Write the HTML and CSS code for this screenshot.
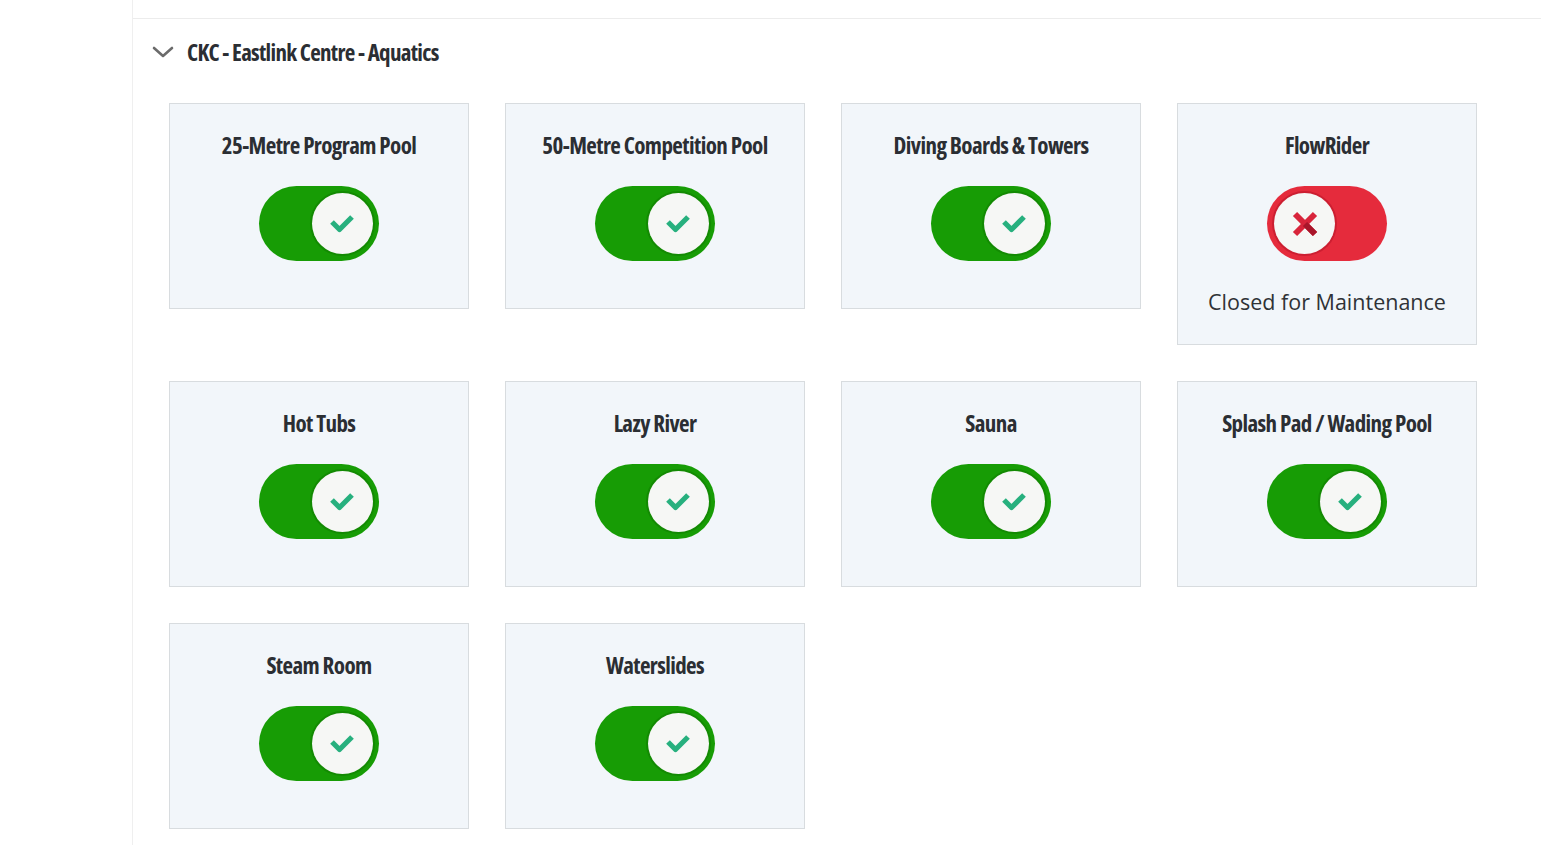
FILE: index.html
```html
<!DOCTYPE html>
<html lang="en">
<head>
<meta charset="utf-8">
<title>CKC - Eastlink Centre - Aquatics</title>
<link rel="stylesheet" href="styles.css">
</head>
<body>
<div class="page">
  <aside class="sidebar"></aside>
  <main class="main">
    <div class="topbar"></div>
    <section class="facility">
      <header class="facility-header">
        <svg class="chevron" width="22" height="14" viewBox="0 0 22 14" aria-hidden="true">
          <path d="M2 3 L11 11 L20 3" fill="none" stroke="#6b6b6b" stroke-width="2.6" stroke-linecap="round" stroke-linejoin="round"/>
        </svg>
        <h2 class="facility-title">CKC - Eastlink Centre - Aquatics</h2>
      </header>
      <div class="grid">
        <div class="card">
          <h3 class="card-title">25-Metre Program Pool</h3>
          <div class="toggle on"><span class="knob"><svg width="26" height="20" viewBox="0 0 26 20"><path d="M2 8 L9.5 15.5 L22 3" fill="none" stroke="#27b07e" stroke-width="5.2" stroke-linejoin="round"/></svg></span></div>
        </div>
        <div class="card">
          <h3 class="card-title">50-Metre Competition Pool</h3>
          <div class="toggle on"><span class="knob"><svg width="26" height="20" viewBox="0 0 26 20"><path d="M2 8 L9.5 15.5 L22 3" fill="none" stroke="#27b07e" stroke-width="5.2" stroke-linejoin="round"/></svg></span></div>
        </div>
        <div class="card">
          <h3 class="card-title">Diving Boards &amp; Towers</h3>
          <div class="toggle on"><span class="knob"><svg width="26" height="20" viewBox="0 0 26 20"><path d="M2 8 L9.5 15.5 L22 3" fill="none" stroke="#27b07e" stroke-width="5.2" stroke-linejoin="round"/></svg></span></div>
        </div>
        <div class="card">
          <h3 class="card-title">FlowRider</h3>
          <div class="toggle off"><span class="knob"><svg width="26" height="26" viewBox="0 0 26 26"><path d="M3 3 L23 23" fill="none" stroke="#d8253b" stroke-width="6"/><path d="M23 3 L3 23" fill="none" stroke="#d8253b" stroke-width="6"/><path d="M13 13 L23 23" fill="none" stroke="#a8162a" stroke-width="6"/></svg></span></div>
          <p class="note">Closed for Maintenance</p>
        </div>
        <div class="card">
          <h3 class="card-title">Hot Tubs</h3>
          <div class="toggle on"><span class="knob"><svg width="26" height="20" viewBox="0 0 26 20"><path d="M2 8 L9.5 15.5 L22 3" fill="none" stroke="#27b07e" stroke-width="5.2" stroke-linejoin="round"/></svg></span></div>
        </div>
        <div class="card">
          <h3 class="card-title">Lazy River</h3>
          <div class="toggle on"><span class="knob"><svg width="26" height="20" viewBox="0 0 26 20"><path d="M2 8 L9.5 15.5 L22 3" fill="none" stroke="#27b07e" stroke-width="5.2" stroke-linejoin="round"/></svg></span></div>
        </div>
        <div class="card">
          <h3 class="card-title">Sauna</h3>
          <div class="toggle on"><span class="knob"><svg width="26" height="20" viewBox="0 0 26 20"><path d="M2 8 L9.5 15.5 L22 3" fill="none" stroke="#27b07e" stroke-width="5.2" stroke-linejoin="round"/></svg></span></div>
        </div>
        <div class="card">
          <h3 class="card-title">Splash Pad / Wading Pool</h3>
          <div class="toggle on"><span class="knob"><svg width="26" height="20" viewBox="0 0 26 20"><path d="M2 8 L9.5 15.5 L22 3" fill="none" stroke="#27b07e" stroke-width="5.2" stroke-linejoin="round"/></svg></span></div>
        </div>
        <div class="card">
          <h3 class="card-title">Steam Room</h3>
          <div class="toggle on"><span class="knob"><svg width="26" height="20" viewBox="0 0 26 20"><path d="M2 8 L9.5 15.5 L22 3" fill="none" stroke="#27b07e" stroke-width="5.2" stroke-linejoin="round"/></svg></span></div>
        </div>
        <div class="card">
          <h3 class="card-title">Waterslides</h3>
          <div class="toggle on"><span class="knob"><svg width="26" height="20" viewBox="0 0 26 20"><path d="M2 8 L9.5 15.5 L22 3" fill="none" stroke="#27b07e" stroke-width="5.2" stroke-linejoin="round"/></svg></span></div>
        </div>
      </div>
    </section>
  </main>
</div>
</body>
</html>
```

FILE: styles.css
```css
* { box-sizing: border-box; }

html, body {
  margin: 0;
  padding: 0;
  background: #ffffff;
  height: 100%;
  overflow: hidden;
}

body {
  font-family: "Open Sans", "Liberation Sans", sans-serif;
  color: #2b2e33;
}

.page {
  display: flex;
  min-height: 100vh;
}

.sidebar {
  width: 133px;
  flex: 0 0 133px;
  border-right: 1px solid #efefef;
}

.main {
  flex: 1;
  min-width: 0;
}

.topbar {
  height: 19px;
  border-bottom: 1px solid #ececec;
}

.facility-header {
  display: flex;
  align-items: center;
  height: 66px;
  padding-left: 19px;
  margin-bottom: 18px;
}

.chevron {
  margin-right: 13px;
  flex: 0 0 auto;
}

.facility-title {
  margin: 0;
  font-family: "Open Sans", sans-serif;
  font-stretch: 75%;
  font-weight: 700;
  font-size: 23px;
  letter-spacing: -0.7px;
  color: #2b2e33;
}

.grid {
  display: grid;
  grid-template-columns: repeat(4, 300px);
  column-gap: 36px;
  row-gap: 36px;
  align-items: start;
  padding-left: 36px;
}

.card {
  background: #f2f6fa;
  border: 1px solid #d8dcdf;
  padding: 26px 10px 27px;
  display: flex;
  flex-direction: column;
  align-items: center;
}

.card-title {
  margin: 0;
  font-family: "Open Sans", sans-serif;
  font-stretch: 75%;
  font-weight: 700;
  font-size: 23px;
  line-height: 30px;
  letter-spacing: -0.6px;
  color: #2b2e33;
  text-align: center;
}

.toggle {
  position: relative;
  width: 120px;
  height: 75px;
  border-radius: 38px;
  margin-top: 26px;
  margin-bottom: 20px;
}

.toggle.on { background: #179c05; }
.toggle.off { background: #e52b3c; }

.knob {
  position: absolute;
  top: 7px;
  width: 61px;
  height: 61px;
  border-radius: 50%;
  background: #f6f7f5;
  display: flex;
  align-items: center;
  justify-content: center;
}

.toggle.on .knob {
  right: 6px;
  box-shadow: 0 0 0 2px #138a03;
}

.toggle.off .knob {
  left: 7px;
  box-shadow: 0 0 0 2px #cc1f31;
}

.note {
  margin: 5px 0 0;
  font-family: "Open Sans", sans-serif;
  font-size: 21.5px;
  line-height: 31px;
  color: #2f3236;
  white-space: nowrap;
}
```
